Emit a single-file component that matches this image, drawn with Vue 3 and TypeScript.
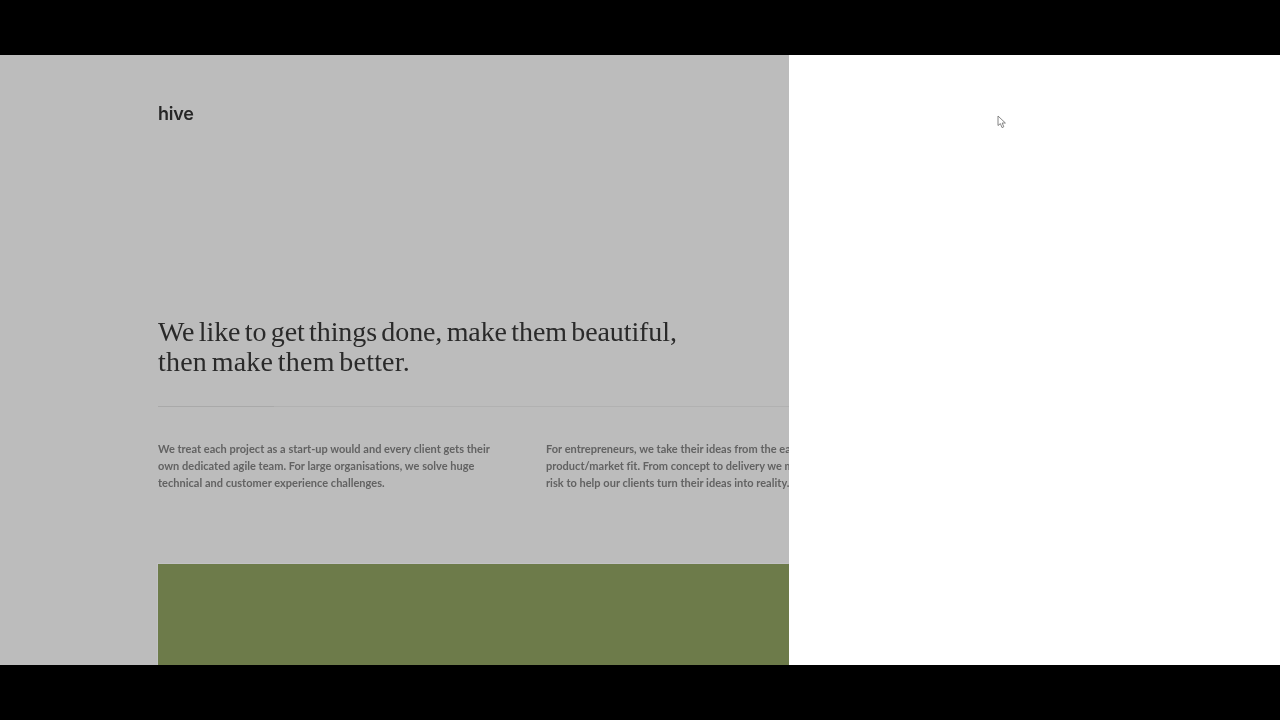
<script setup lang="ts">
const columns: string[][] = [
  [
    'We treat each project as a start-up would and every client gets their',
    'own dedicated agile team. For large organisations, we solve huge',
    'technical and customer experience challenges.',
  ],
  [
    'For entrepreneurs, we take their ideas from the earliest stage to',
    'product/market fit. From concept to delivery we minimise the',
    'risk to help our clients turn their ideas into reality.',
  ],
]
</script>

<template>
  <div class="frame">
    <div class="stage">
      <main class="panel">
        <div class="content">
          <div class="logo">hive</div>
          <h1 class="headline">
            <span class="head-line first">We like to get things done, make them beautiful,</span>
            <span class="head-line second">then make them better.</span>
          </h1>
          <div class="rule"></div>
          <div class="columns">
            <p v-for="(lines, i) in columns" :key="i" class="para">
              <span v-for="line in lines" :key="line" class="line">{{ line }}</span>
            </p>
          </div>
          <div class="hero"></div>
        </div>
      </main>
      <aside class="blank"></aside>
      <svg class="cursor" width="10" height="14" viewBox="0 0 10 14">
        <path d="M1 1 L1 10.5 L3.4 8.6 L5 12.6 L6.8 11.8 L5.2 8 L8.4 8 Z" fill="#fff" stroke="#777" stroke-width="0.9" stroke-linejoin="round" />
      </svg>
    </div>
  </div>
</template>

<style>
html, body { margin: 0; background: #000; }
</style>

<style scoped>
.frame {
  width: 1280px;
  height: 720px;
  background: #000;
  padding: 55px 0;
  box-sizing: border-box;
}
.stage {
  position: relative;
  display: flex;
  height: 610px;
  overflow: hidden;
}
.panel {
  width: 789px;
  flex: none;
  background: #bcbcbc;
  overflow: hidden;
}
.blank {
  flex: 1;
  background: #fff;
}
.content {
  padding: 48px 0 0 158px;
}
.logo {
  font-family: "Inter", "Liberation Sans", sans-serif;
  font-size: 18px;
  font-weight: 600;
  line-height: 22px;
  color: #262626;
  letter-spacing: -0.2px;
  filter: blur(0.35px);
}
.headline {
  margin: 192px 0 0;
  font-family: "Liberation Serif", serif;
  font-size: 28px;
  font-weight: 400;
  line-height: 30px;
  color: #2a2a2a;
  white-space: nowrap;
  word-spacing: -2.5px;
  filter: blur(0.3px);
}
.head-line {
  display: block;
}
.first {
  letter-spacing: -0.1px;
}
.second {
  letter-spacing: 0.2px;
}
.rule {
  height: 1px;
  margin-top: 29px;
  background: linear-gradient(to right, #a9a9a9 116px, #b1b1b1 116px);
}
.columns {
  display: flex;
  gap: 56px;
  margin-top: 33px;
}
.para {
  margin: 0;
  width: 332px;
  flex: none;
  font-family: "Lato", "Liberation Sans", sans-serif;
  font-size: 11px;
  font-weight: 700;
  line-height: 17px;
  letter-spacing: 0.02px;
  color: #626262;
  white-space: nowrap;
  filter: blur(0.35px);
}
.line {
  display: block;
}
.hero {
  height: 110px;
  margin-top: 73px;
  background: #6d7b4a;
  box-shadow: -1px -1px 0 #c2c2c4;
}
.cursor {
  position: absolute;
  left: 997px;
  top: 60px;
}
</style>
